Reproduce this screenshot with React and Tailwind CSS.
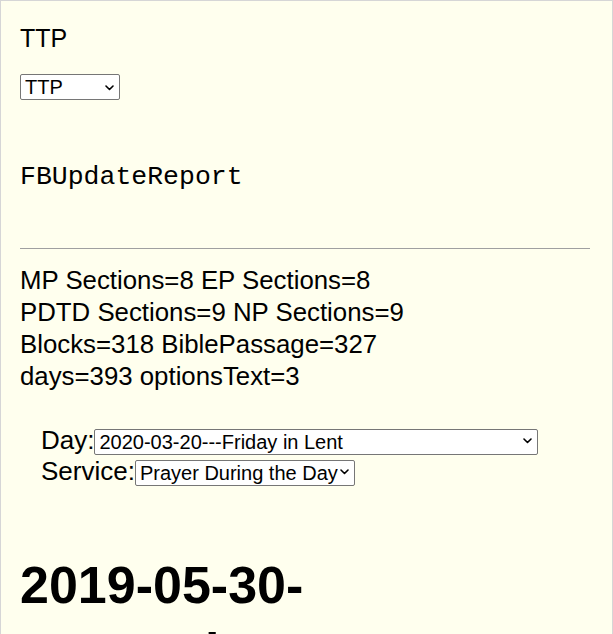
import React from "react";

function Chevron() {
  return (
    <svg width="9" height="6" viewBox="0 0 9 6" className="absolute right-[6px] top-1/2 -translate-y-1/2 pointer-events-none">
      <path d="M1 1 L4.5 4.5 L8 1" fill="none" stroke="#000" strokeWidth="1.6" strokeLinecap="round" strokeLinejoin="round" />
    </svg>
  );
}

function Sel({ w, text }) {
  return (
    <span className={`relative inline-block align-middle ${w}`}>
      <select className="appearance-none w-full h-[26px] bg-white border border-[#767676] rounded-[2px] pl-[4px] pr-[16px] text-[20px] leading-[22px] text-black outline-none" style={{ fontFamily: '"Liberation Sans", Arial, sans-serif' }}>
        <option>{text}</option>
      </select>
      <Chevron />
    </span>
  );
}

export default function App() {
  return (
    <div className="h-[634px] bg-[#ffffee] border-t border-l border-r border-[#d6d6d6] text-black overflow-hidden" style={{ fontFamily: '"Liberation Sans", Arial, sans-serif' }}>
      <div className="px-[19px]">
        <div className="pt-[22px] text-[25px] leading-[30px]">TTP</div>
        <div className="mt-[21px]">
          <Sel w="w-[100px]" text="TTP" />
        </div>
        <div className="mt-[61px] text-[26.5px] leading-[30px]" style={{ fontFamily: '"Liberation Mono", "Courier New", monospace' }}>FBUpdateReport</div>
        <hr className="mt-[56px] mr-[3px] border-t border-[#a0a0a0]" />
        <div className="mt-[15px] text-[25.8px] leading-[32px]">
          <div>MP Sections=8 EP Sections=8</div>
          <div>PDTD Sections=9 NP Sections=9</div>
          <div>Blocks=318 BiblePassage=327</div>
          <div>days=393 optionsText=3</div>
        </div>
        <div className="mt-[33px] pl-[21px] text-[26px] leading-[31px]">
          <div className="flex items-center">
            <span>Day:</span>
            <Sel w="w-[444px]" text="2020-03-20---Friday in Lent" />
          </div>
          <div className="flex items-center">
            <span>Service:</span>
            <Sel w="w-[220px]" text="Prayer During the Day" />
          </div>
        </div>
        <h1 className="mt-[65px] text-[52px] leading-[67px] font-bold w-[420px]">2019-05-30-Ascension Day</h1>
      </div>
    </div>
  );
}
